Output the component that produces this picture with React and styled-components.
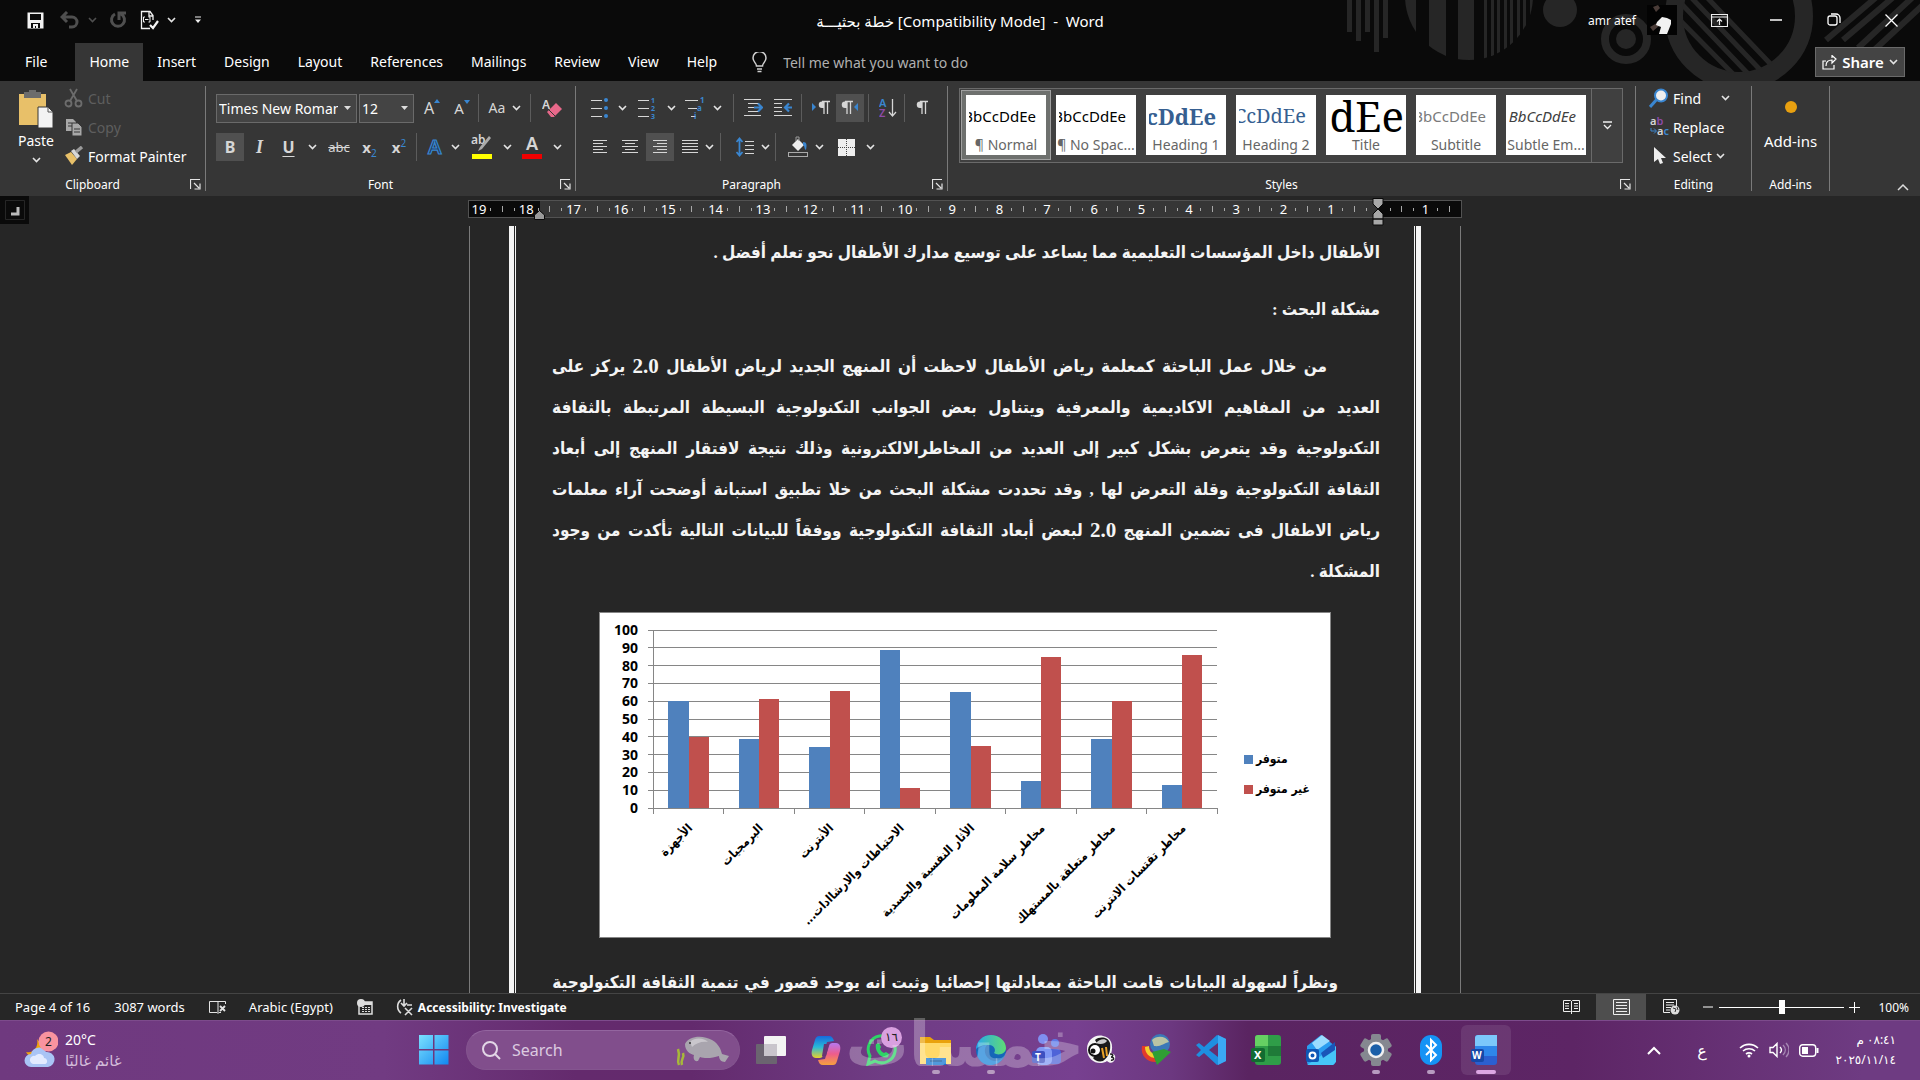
import React from 'react';
import styled, { createGlobalStyle, css } from 'styled-components';

const ui = `"Noto Sans", "Open Sans", "DejaVu Sans", sans-serif`;
const arabic = `"DejaVu Sans Condensed", "DejaVu Sans", sans-serif`;
const blue = '#3a86d0';
const ink = '#d6d6d6';

const GlobalStyle = createGlobalStyle`
  * { box-sizing: border-box; }
  body { margin: 0; background: #262626; }
  button, input, select { font: inherit; color: inherit; border: 0; background: none; padding: 0; margin: 0; border-radius: 0; outline: none; }
  svg { display: block; flex: none; }
`;

// ─── Shell ────────────────────────────────────────────────────
const Shell = styled.div`
  height: 100vh;
  display: flex;
  flex-direction: column;
  overflow: hidden;
  background: #262626;
  color: #fff;
  font-family: ${ui};
  font-size: 12px;
`;

const Header = styled.header`
  position: relative;
  flex: none;
  background: #0a0a0a;
`;

const Deco = styled.svg`
  position: absolute;
  top: 0;
  right: 0;
`;

const TitleBar = styled.div`
  position: relative;
  height: 43px;
  display: grid;
  grid-template-columns: 1fr auto 1fr;
  align-items: start;
`;

const QuickAccess = styled.div`
  display: flex;
  align-items: center;
  height: 40px;
  padding-left: 18px;
`;

const DocTitle = styled.h1`
  margin: 0;
  height: 42px;
  line-height: 42px;
  font-size: 15px;
  font-weight: 400;
  white-space: pre;
`;

const WindowTools = styled.div`
  display: flex;
  align-items: center;
  justify-content: flex-end;
  height: 40px;
`;

const UserName = styled.span`
  margin-right: 11px;
`;

const Avatar = styled.svg`
  margin-right: 14px;
`;

const Cell = styled.button`
  flex: none;
  display: flex;
  align-items: center;
  justify-content: center;
  width: ${({ $w }) => $w || 28}px;
  height: 28px;
  color: ${ink};
  background: ${({ $on }) => ($on ? '#505050' : 'transparent')};
`;

const Tabs = styled.nav`
  position: relative;
  display: flex;
  height: 38px;
  padding-left: 11px;
  font-size: 14px;
`;

const Tab = styled.button`
  padding: 0 14px 1px;
  margin-right: ${({ $file }) => ($file ? 14 : 0)}px;
  background: ${({ $on }) => ($on ? '#363636' : 'transparent')};
`;

const TellMe = styled.label`
  display: flex;
  align-items: center;
  gap: 16px;
  padding-left: 21px;

  input { width: 220px; }
  input::placeholder { color: #b0b0b0; opacity: 1; }
`;

const Share = styled.button`
  display: flex;
  align-items: center;
  justify-content: center;
  gap: 5px;
  width: 90px;
  height: 30px;
  margin: 4px 15px 0 auto;
  border: 1px solid #6a6a6a;
  background: #444;
  font-size: 15px;
  font-weight: 600;
`;

// ─── Ribbon ───────────────────────────────────────────────────
const Ribbon = styled.section`
  flex: none;
  display: flex;
  height: 115px;
  padding-top: 5px;
  background: #363636;
`;

const Group = styled.div`
  flex: ${({ $grow, $w }) => ($grow ? '1 1 auto' : `0 0 ${$w}px`)};
  min-width: 0;
  height: 105px;
  display: flex;
  flex-direction: column;
  border-right: 1px solid #7a7a7a;
`;

const GroupBody = styled.div`
  flex: 1;
  min-height: 0;
  padding: ${({ $pad }) => $pad || '0'};
`;

const GroupFoot = styled.div`
  height: 13px;
  display: grid;
  grid-template-columns: ${({ $plain }) => ($plain ? '1fr' : '1fr 20px')};
  align-items: center;
  justify-items: center;
  font-size: 12px;
  line-height: 13px;
`;

const ToolRow = styled.div`
  display: flex;
  align-items: center;
  height: 28px;
  margin-bottom: 11px;
`;

const Rule = styled.span`
  flex: none;
  width: 1px;
  height: 28px;
  margin: 0 ${({ $m, $r }) => $r || $m || 0}px 0 ${({ $m }) => $m || 0}px;
  background: #5c5c5c;
`;

const Picker = styled.label`
  display: flex;
  align-items: center;
  justify-content: space-between;
  width: ${({ $w }) => $w}px;
  height: 29px;
  margin-right: 2px;
  padding-right: 5px;
  border: 1px solid #6a6a6a;
  background: #444;
  font-size: 14px;

  select {
    appearance: none;
    width: calc(100% - 13px);
    height: 27px;
    padding-left: 2px;
    overflow: hidden;
  }
`;

const Glyph = styled.span`
  font-size: ${({ $s }) => $s || 16}px;
  font-weight: ${({ $b }) => ($b ? 700 : 400)};
  line-height: 20px;
  ${({ $serif }) => $serif && css`font-family: "Liberation Serif", serif; font-style: italic;`}
  ${({ $u }) => $u && css`text-decoration: underline; text-underline-offset: 3px;`}
  ${({ $strike }) => $strike && css`text-decoration: line-through;`}
  sub, sup { color: ${blue}; font-size: 10px; line-height: 0; font-weight: 400; }
`;

const ClipboardGrid = styled.div`
  display: flex;
`;

const PasteButton = styled.button`
  width: 56px;
  display: flex;
  flex-direction: column;
  align-items: center;
  font-size: 14px;
  line-height: 16px;
  svg + span { margin: 3px 0 8px; }
`;

const Stack = styled.div`
  display: flex;
  flex-direction: column;
  font-size: 14px;
`;

const StackItem = styled.button`
  display: flex;
  align-items: center;
  gap: 4px;
  height: 29px;
  padding-bottom: 5px;
  white-space: nowrap;
  color: ${({ $off }) => ($off ? '#5e5e5e' : '#fff')};
  > svg:last-child:not(:first-child) { margin-left: ${({ $gap }) => $gap || 0}px; }
`;

const Gallery = styled.div`
  display: flex;
  width: 664px;
  height: 75px;
  border: 1px solid #6a6a6a;
  background: #404040;
`;

const StyleCard = styled.button`
  flex: none;
  width: 90px;
  height: 70px;
  margin: 1px 0 0 ${({ $on }) => ($on ? 1 : 0)}px;
  border: 1px solid ${({ $on }) => ($on ? '#a0a0a0' : 'transparent')};
  padding: 4px;
  background: ${({ $on }) => ($on ? '#6e706e' : 'transparent')};
`;

const StyleInner = styled.span`
  display: flex;
  flex-direction: column;
  height: 60px;
  background: #fff;
  color: #666;
  font-size: 14px;
  line-height: 20px;
  white-space: nowrap;
`;

const Sample = styled.span`
  display: flex;
  justify-content: flex-end;
  align-items: center;
  height: 38px;
  margin: 2px 2px 0 3px;
  padding-right: ${({ $end }) => $end}px;
  overflow: hidden;
  color: ${({ $c }) => $c || '#000'};
  font-size: ${({ $s }) => $s || 15}px;
  line-height: 36px;
  font-family: ${({ $serif }) => ($serif ? '"Noto Serif", "Liberation Serif", serif' : ui)};
  font-style: ${({ $i }) => ($i ? 'italic' : 'normal')};
  font-weight: ${({ $b }) => ($b ? 700 : 400)};
`;

const GalleryMore = styled.button`
  width: 31px;
  margin-left: auto;
  border-left: 1px solid #6a6a6a;
  display: flex;
  align-items: center;
  justify-content: center;
`;

const AddIns = styled.button`
  display: flex;
  flex-direction: column;
  align-items: center;
  width: 100%;
  font-size: 15px;
  line-height: 18px;
  gap: 18px;
`;

const Collapse = styled.button`
  align-self: flex-end;
  width: 90px;
  display: flex;
  justify-content: flex-end;
  padding: 0 11px 5px 0;
`;

// ─── Document ─────────────────────────────────────────────────
const Workspace = styled.main`
  position: relative;
  flex: 1;
  min-height: 0;
  display: flex;
  flex-direction: column;
  align-items: center;
  padding-left: 10px;
  overflow: hidden;
`;

const TabStop = styled.button`
  position: absolute;
  left: 0;
  top: 0;
  width: 29px;
  height: 28px;
  background: #0a0a0a;
  display: flex;
  align-items: center;
  justify-content: center;
`;

const RulerWrap = styled.div`
  position: relative;
  flex: none;
  width: 994px;
  height: 30px;
  padding-top: 4px;
`;

const Ruler = styled.div`
  height: 18px;
  padding-left: 4px;
  overflow: hidden;
  border: 1px solid #525252;
  background: linear-gradient(90deg, #0a0a0a 71px, #363636 71px, #363636 910px, #0a0a0a 910px);
`;

const Scale = styled.div`
  display: grid;
  grid-template-columns: repeat(21, 1fr);
  width: 994px;
`;

const Centimetre = styled.span`
  display: grid;
  grid-template-columns: repeat(4, minmax(0, 1fr));
  align-items: center;
  justify-items: center;
  font-size: 13px;
  line-height: 16px;
`;

const Tick = styled.i`
  width: 1px;
  height: ${({ $h }) => $h}px;
  background: #a8a8a8;
`;

const Markers = styled.svg`
  position: absolute;
  top: ${({ $top }) => $top}px;
  ${({ $left }) => ($left ? 'left: 66px;' : 'right: 78px;')}
`;

const Page = styled.article`
  flex: 1;
  min-height: 0;
  width: 992px;
  padding: 0 39px;
  border: solid #7a7a7a;
  border-width: 0 1px;
  overflow: hidden;
`;

const PageFrame = styled.div`
  height: 100%;
  display: flex;
  border: solid #f4f4f4;
  border-width: 0 5px;
`;

const PageInner = styled.div`
  flex: 1;
  min-width: 0;
  margin: 0 1px;
  padding: 6px 34px 0 36px;
  border: solid #f4f4f4;
  border-width: 0 1px;
  direction: rtl;
  font-family: "Liberation Serif", ${arabic};
  font-size: 17px;
  font-weight: 700;
  color: #f4f4f4;
  line-height: 41px;
`;

const Paragraph = styled.p`
  margin: 0 0 16px;
`;

const Line = styled.span`
  display: block;
  height: 41px;
  margin-right: ${({ $indent }) => $indent || 0}px;
  white-space: nowrap;
  ${({ $full }) => $full && css`
    display: flex;
    justify-content: space-between;
  `}
`;

const Word = styled.span`
  font-size: ${({ $number }) => ($number ? 21 : 17)}px;
`;

const Figure = styled.figure`
  margin: 20px 49px 24px 0;
  width: 732px;
`;

// ─── Status bar ───────────────────────────────────────────────
const StatusBar = styled.footer`
  flex: none;
  height: 27px;
  display: flex;
  align-items: center;
  padding: 0 11px 0 15px;
  border-top: 1px solid #444;
  background: #262626;
  font-size: 12px;
`;

const StatusItem = styled.button`
  display: flex;
  align-items: center;
  gap: 3px;
  white-space: nowrap;
  margin-right: ${({ $m }) => $m || 24}px;
  font-size: ${({ $b }) => ($b ? 12 : 13)}px;
  font-weight: ${({ $b }) => ($b ? 700 : 400)};
`;

const Views = styled.div`
  display: flex;
  margin-left: auto;
`;

const ViewButton = styled.button`
  width: 50px;
  height: 26px;
  display: flex;
  align-items: center;
  justify-content: center;
  background: ${({ $on }) => ($on ? '#4e4e4e' : 'transparent')};
`;

const Zoom = styled.label`
  display: flex;
  align-items: center;
  gap: 5px;

  input {
    appearance: none;
    width: 125px;
    height: 16px;
    background: linear-gradient(#fff, #fff) center / 100% 1px no-repeat;
  }
  input::-webkit-slider-thumb {
    appearance: none;
    width: 6px;
    height: 14px;
    background: #fff;
  }
`;

const Percent = styled.span`
  margin-left: 17px;
  width: 32px;
  text-align: right;
`;

// ─── Taskbar ──────────────────────────────────────────────────
const Taskbar = styled.section`
  position: relative;
  flex: none;
  height: 60px;
  display: grid;
  grid-template-columns: 1fr auto 1fr;
  align-items: center;
  border-top: 1px solid #7d4b8c;
  padding-bottom: 1px;
  background: linear-gradient(90deg, #6f397f 0, #713b82 20%, #642a6d 30%, #632a6d 36%, #6f3c84 46%, #774090 56%, #6c3880 61%, #5a2461 65%, #5d2565 82%, #6e3b82 97%);
`;

const Weather = styled.button`
  display: flex;
  align-items: center;
  gap: 7px;
  padding-left: 24px;
  text-align: left;
  line-height: 20px;
  font-size: 14px;
  justify-self: start;
  small { display: block; font-size: 15px; color: #d3bcd9; }
`;

const Dock = styled.div`
  display: flex;
  align-items: center;
  margin-left: 10px;
`;

const Start = styled.button`
  margin-right: 17px;
`;

const Search = styled.label`
  display: flex;
  align-items: center;
  width: 274px;
  height: 40px;
  padding: 0 9px 0 15px;
  border: 1px solid #93659f;
  border-color: #93659f #84558f #84558f;
  border-radius: 20px;
  background: #814e8c;
  font-size: 16px;
  color: #dccbe0;

  input { flex: 1; min-width: 0; margin-left: 11px; }
  input::placeholder { color: #dccbe0; opacity: 1; }
`;

const Apps = styled.div`
  display: flex;
  gap: 5px;
  margin-left: 6px;
`;

const DockApp = styled.button`
  position: relative;
  width: 50px;
  height: 50px;
  display: flex;
  align-items: center;
  justify-content: center;
  border-radius: 6px;
  background: ${({ $active }) => ($active ? 'rgba(255,255,255,0.09)' : 'transparent')};
  ${({ $run, $active }) => $run && css`
    &::after {
      content: '';
      position: absolute;
      bottom: 1px;
      width: ${$active ? 20 : 8}px;
      height: 4px;
      border-radius: 2px;
      background: ${$active ? '#dda6e4' : '#b79bc0'};
    }
  `}
`;

const Badge = styled.span`
  position: absolute;
  top: 2px;
  right: 4px;
  width: 21px;
  height: 21px;
  border-radius: 50%;
  background: #d9a0e0;
  color: #222;
  font-size: 12px;
  line-height: 20px;
  text-align: center;
`;

const Tray = styled.div`
  justify-self: end;
  display: flex;
  align-items: center;
  padding-right: 24px;
`;

const TrayItem = styled.button`
  width: ${({ $w }) => $w}px;
  display: flex;
  justify-content: center;
  font-size: 16px;
`;

const Clock = styled.time`
  margin-left: 2px;
  width: 62px;
  direction: rtl;
  text-align: right;
  line-height: 20px;
  font-size: 12px;
  white-space: nowrap;
`;

const Watermark = styled.div`
  position: absolute;
  left: 44%;
  width: 240px;
  bottom: -5px;
  text-align: center;
  direction: rtl;
  font-family: "DejaVu Sans", sans-serif;
  font-size: 63px;
  line-height: 80px;
  font-weight: 700;
  color: rgba(255, 255, 255, 0.27);
  pointer-events: none;
`;

// ─── Small drawings ───────────────────────────────────────────
const Chevron = ({ c = '#e4e4e4' }) => (
  <svg width="9" height="6" viewBox="0 0 9 6"><path d="M1 1l3.5 3.5L8 1" fill="none" stroke={c} strokeWidth="1.6" /></svg>
);

const Launcher = () => (
  <svg width="11" height="11" viewBox="0 0 11 11" fill="none" stroke="#e4e4e4"><path d="M.5 10V.5H10M4 4l5 5M10 4.5V10H4.500" strokeWidth="1.2" /></svg>
);

const Lines = ({ rows, w = 18, c = ink }) => (
  <svg width={w} height="18" viewBox={`0 0 ${w} 18`}>
    {rows.map(([x, len], i) => <rect key={i} x={x} y={2 + i * 3} width={len} height="1" fill={c} />)}
  </svg>
);

const BulletIcon = ({ kind }) => (
  <svg width="20" height="22" viewBox="0 0 20 22">
    {[3, 11, 19].map((y, i) => (
      <g key={y}>
        <rect x={kind === 'multi' ? i * 3 : 1} y={y} width={kind === 'multi' ? 13 - i * 4 : 11} height="1" fill={ink} />
        {kind === 'dot' && <circle cx="16" cy={y} r="2" fill={blue} />}
        {kind === 'num' && <text x="14" y={y + 3} fontSize="7" fontWeight="700" fill={blue}>{i + 1}</text>}
        {kind === 'multi' && <text x={15 - i * 3} y={y + 3} fontSize="8" fontWeight="700" fill={blue}>{['1', 'a', 'i'][i]}</text>}
      </g>
    ))}
  </svg>
);

const IndentIcon = ({ back }) => (
  <svg width="20" height="20" viewBox="0 0 20 20">
    <path d={back ? 'M1 1.500h18M1 5.500h8M1 9.500h8M1 13.500h8M1 17.500h18' : 'M1 1.500h17M5 5.500h11M5 9.500h7M5 13.500h11M1 17.500h17'} stroke={ink} fill="none" />
    <path d={back ? 'M19 9.500h-7M16 5.500l-4 4 4 4' : 'M11 9.500h8M15 5.500l4 4-4 4'} stroke={blue} strokeWidth="2.200" fill="none" />
  </svg>
);

const Pilcrow = ({ side }) => (
  <svg width="20" height="20" viewBox="0 0 20 20">
    {side === 'ltr' && <path d="M1 5v8l4-4z" fill={blue} />}
    {side === 'rtl' && <path d="M18 5v8l-4-4z" fill={blue} />}
    <g transform={side === 'ltr' ? 'translate(3 0)' : side === 'rtl' ? 'translate(-3 0)' : 'translate(0 0)'}>
      <path d="M8 3.500h8M10 3.500V16M13.500 3.500V16" stroke={ink} strokeWidth="1.300" fill="none" />
      <path d="M10 3.500H8a3.200 3.200 0 0 0 0 6.500h2z" fill={ink} />
    </g>
  </svg>
);

const FontColor = ({ bar, children }) => (
  <svg width="22" height="26" viewBox="0 0 22 26">{children}<rect x="1" y="20" width="20" height="5" fill={bar} /></svg>
);

const HeaderArt = () => (
  <Deco width="600" height="81" viewBox="0 0 600 81" aria-hidden="true">
    <g fill="#262626">
      {[[27, 32], [36, 41], [45, 32], [54, 52], [63, 38]].map(([x, h]) => <rect key={x} x={x} width="5" height={h} />)}
      <clipPath id="disc"><circle cx="149" cy="-4" r="64" /></clipPath>
      <g clipPath="url(#disc)">
        <rect x="85" width="11" height="80" /><rect x="109" width="17" height="80" /><rect x="138" width="16" height="80" />
        {[164, 171, 177, 184, 190, 197, 203, 210].map(x => <rect key={x} x={x} width="3" height="80" />)}
      </g>
      <circle cx="240" cy="10" r="17" />
      <circle cx="306" cy="39" r="10" />
    </g>
    <circle cx="306" cy="39" r="21" fill="none" stroke="#262626" strokeWidth="8" />
    <circle cx="419" cy="16" r="65" fill="none" stroke="#262626" strokeWidth="18" />
    <clipPath id="ring"><circle cx="419" cy="16" r="57" /></clipPath>
    <path d="M340 0l80 81M354-4l80 84M366-8l80 84M378-12l84 88M340 24l60 60" stroke="#262626" strokeWidth="5" clipPath="url(#ring)" />
    <path d="M560-6l-54 46M577-6l-54 46M594-4l-56 52M606 2l-56 52" stroke="#262626" strokeWidth="6" />
  </Deco>
);

const Chart = () => {
  const values = [[60, 40], [39, 61], [34.5, 65.5], [89, 11], [65, 35], [15, 85], [39, 60], [13, 86]];
  const names = ['الأجهزة', 'البرمجيات', 'الأنترنت', 'الاحتياطات والارشاادات...', 'الأثار النفسية والجسدية', 'مخاطر سلامة المعلومات', 'مخاطر متعلقة بالمستهلك', 'مخاطر تقتسات الانترنت'];
  const y = v => 196 - v * 1.78;
  return (
    <svg width="732" height="326" viewBox="0 0 732 326" fontFamily={ui} fontWeight="700">
      <rect x="0.5" y="0.5" width="731" height="325" fill="#fff" stroke="#868686" />
      <g stroke="#868686" shapeRendering="crispEdges">
        {[...Array(11)].map((_, i) => <line key={i} x1="49" x2="618" y1={y(i * 10)} y2={y(i * 10)} />)}
        {[...Array(9)].map((_, i) => <line key={i} x1={54 + i * 70.5} x2={54 + i * 70.5} y1={i ? 196 : 18} y2="202" />)}
      </g>
      {values.map(([a, b], i) => (
        <g key={i} shapeRendering="crispEdges">
          <rect x={69 + i * 70.5} y={y(a)} width="20.5" height={a * 1.78} fill="#4f81bd" />
          <rect x={89.5 + i * 70.5} y={y(b)} width="20" height={b * 1.78} fill="#c0504d" />
        </g>
      ))}
      {[...Array(11)].map((_, i) => <text key={i} x="39" y={y(i * 10) + 5} textAnchor="end" fontSize="14" direction="ltr">{i * 10}</text>)}
      {names.map((n, i) => (
        <text key={n} transform={`translate(${94 + i * 70.5} 217) rotate(-45)`} direction="rtl" textAnchor="start" fontSize="12" fontFamily={arabic}>{n}</text>
      ))}
      <rect x="645" y="143" width="9" height="9" fill="#4f81bd" />
      <rect x="645" y="173" width="9" height="9" fill="#c0504d" />
      <g fontSize="12" direction="rtl" textAnchor="end" fontFamily={arabic}>
        <text x="657" y="151">متوفر</text>
        <text x="657" y="181">غير متوفر</text>
      </g>
    </svg>
  );
};

// ─── Taskbar icons ────────────────────────────────────────────
const Tile = ({ children }) => <svg width="32" height="32" viewBox="0 0 32 32">{children}</svg>;

const dock = [
  { name: 'Task view', icon: <Tile><rect x="1" y="10" width="21" height="20" rx="1" fill="#6b6470" /><rect x="9" y="2" width="22" height="20" rx="1" fill="#f3f3f3" /><rect x="9" y="10" width="13" height="12" fill="#c9c5cc" /></Tile> },
  {
    name: 'Copilot',
    icon: (
      <Tile>
        <linearGradient id="cpa" x1="0" y1="0" x2="0" y2="1"><stop stopColor="#1769dd" /><stop offset=".5" stopColor="#28b9d8" /><stop offset="1" stopColor="#e9d12c" /></linearGradient>
        <linearGradient id="cpb" x1="0" y1="0" x2="0" y2="1"><stop stopColor="#b678f0" /><stop offset=".5" stopColor="#ee5c8b" /><stop offset="1" stopColor="#f6a13d" /></linearGradient>
        <path d="M9 2h10c3 0 4 2 5 5l-7 1-4 13c-1 3-2 3-5 3H6c-4 0-5-4-4-8l3-10c1-3 2-4 4-4z" fill="url(#cpa)" />
        <path d="M23 31H13c-3 0-4-2-5-5l7-1 4-13c1-3 2-3 5-3h2c4 0 5 4 4 8l-3 10c-1 3-2 4-4 4z" fill="url(#cpb)" />
        <path d="M14 10h5l-3 12h-4z" fill="#693473" />
      </Tile>
    ),
  },
  { name: 'WhatsApp', badge: '١٦', icon: <Tile><path d="M3 30l2-8A13.500 13.500 0 1 1 10 27z" fill="none" stroke="#2ed366" strokeWidth="3" /><path d="M11 10l3-1 2 4-1 2c1 2 2 3 4 4l2-1 3 2-1 3c-6 3-14-6-12-13z" fill="#2ed366" /></Tile> },
  { name: 'File Explorer', run: true, icon: <Tile><path d="M0 3h10l4 3h17v24H0z" fill="#e9a20c" /><rect y="9" width="31" height="21" fill="#ffd968" /><path d="M6 24h20v7H6z" fill="#1273cf" /><path d="M10 27h12" stroke="#0b4c92" strokeWidth="1.500" /></Tile> },
  {
    name: 'Edge',
    run: true,
    icon: (
      <Tile>
        <linearGradient id="edg" x1="0" x2="1"><stop stopColor="#2aa7ea" /><stop offset="1" stopColor="#5fdc74" /></linearGradient>
        <circle cx="16" cy="16" r="15" fill="#1567b8" />
        <path d="M1 16C1 7 8 1 16 1s15 6 15 13c0 6-8 8-12 5 2-2 1-8-5-8-7 0-13 2-13 5z" fill="url(#edg)" />
        <path d="M2 20c1-7 6-9 10-9-3 3-3 9 1 13s10 4 15 0c-3 5-8 7-13 7C8 31 3 26 2 20z" fill="#1b83d8" />
      </Tile>
    ),
  },
  { name: 'Teams', icon: <Tile><circle cx="13" cy="5" r="5" fill="#7f8ff0" /><circle cx="25" cy="9" r="4" fill="#5e7ae8" /><rect x="18" y="15" width="13" height="15" rx="4" fill="#4e63d8" /><rect x="6" y="13" width="16" height="18" rx="5" fill="#8098f5" /><rect x="2" y="17" width="13" height="12" rx="2" fill="#3d4fc0" /><text x="5" y="27" fontSize="10" fontWeight="700" fill="#fff">T</text></Tile> },
  { name: 'Bee', icon: <Tile><path d="M2 15C2 6 10 0 18 2c8 1 11 9 8 18 3-1 5 2 4 5-1 4-5 5-8 2-7 5-20 1-20-12z" fill="#f4f4f4" /><path d="M10 6c5-4 13-3 15 3 1 7-1 14-7 18-4 1-8 0-10-3l8-8z" fill="#1b1b1b" /><circle cx="10" cy="16" r="7" fill="#111" /><circle cx="10" cy="16" r="5" fill="#fff" /><circle cx="8" cy="17" r="2.500" fill="#111" /><path d="M17 14l2 10M21 13l1 9" stroke="#e9a227" strokeWidth="2" /><path d="M11 9c3-4 9-5 11-2-2 3-7 4-11 2z" fill="#ccc" /><path d="M25 20c4 0 3 3 1 3 4 0 3 4 0 3" stroke="#222" fill="none" strokeWidth="1.500" /></Tile> },
  { name: 'Download Manager', icon: <Tile><circle cx="20" cy="10" r="10" fill="#3b78b8" /><path d="M12 6c5-5 14-4 17 2-5 1-8 5-15 4z" fill="#b9c4a4" /><path d="M2 12c-2 10 6 17 15 16l-1-5C9 23 6 18 7 12z" fill="#e33a2a" /><path d="M5 13c0 6 4 11 11 11v-4c-4 0-7-3-7-8z" fill="#f4cf2d" /><path d="M12 18l12-3 7 3-14 13z" fill="#2f9e33" /></Tile> },
  { name: 'VS Code', icon: <Tile><path d="M22 1l9 4v22l-9 4L9 19l-5 4-3-2 5-5-5-5 3-2 5 4z" fill="#1e8fe0" /><path d="M23 9v14l-9-7z" fill="#642f70" /><path d="M23 1l8 4v22l-8 4z" fill="#3ba9f4" /></Tile> },
  { name: 'Excel', icon: <Tile><rect x="5" y="1" width="26" height="30" rx="3" fill="#2f9d48" /><path d="M5 12V4a3 3 0 0 1 3-3h10v11z" fill="#66d063" /><rect x="18" y="12" width="13" height="10" fill="#1f7a38" /><rect x="1" y="14" width="14" height="14" rx="2" fill="#136b31" /><text x="4" y="25" fontSize="11" fontWeight="700" fill="#fff">X</text></Tile> },
  { name: 'Outlook', icon: <Tile><path d="M2 12L16 1l14 11v16a3 3 0 0 1-3 3H5a3 3 0 0 1-3-3z" fill="#2a9df0" /><path d="M7 9l10-8 8 6-13 9z" fill="#9bdcff" /><path d="M2 31L31 12v16l-3 3z" fill="#46c5f8" /><path d="M16 19L30 8v8L18 24z" fill="#1a55b8" /><rect x="1" y="15" width="13" height="13" rx="2" fill="#0f57b5" /><circle cx="7.500" cy="21.500" r="3" fill="none" stroke="#fff" strokeWidth="2" /></Tile> },
  { name: 'Settings', run: true, icon: <Tile><g fill="#858890">{[0, 60, 120].map(r => <rect key={r} x="11" width="10" height="32" rx="2" transform={`rotate(${r} 16 16)`} />)}<circle cx="16" cy="16" r="12" /></g><circle cx="16" cy="16" r="7" fill="#1b5fa8" stroke="#f0f0f0" strokeWidth="2.500" /></Tile> },
  { name: 'Bluetooth', run: true, icon: <Tile><rect x="5" y="1" width="22" height="30" rx="11" fill="#1593f5" /><path d="M11 11l10 10-5 5V6l5 5-10 10" fill="none" stroke="#fff" strokeWidth="2" /></Tile> },
  { name: 'Word', run: true, active: true, icon: <Tile><rect x="5" y="1" width="22" height="30" rx="3" fill="#2b5fd0" /><path d="M5 12V4a3 3 0 0 1 3-3h19v11z" fill="#7cc8fb" /><rect x="5" y="12" width="22" height="10" fill="#2e87ea" /><rect x="1" y="15" width="13" height="13" rx="2" fill="#1648a8" /><text x="2" y="25" fontSize="10" fontWeight="700" fill="#fff">W</text></Tile> },
];

const tabs = ['File', 'Home', 'Insert', 'Design', 'Layout', 'References', 'Mailings', 'Review', 'View', 'Help'];

const gallery = [
  { label: '¶ Normal', end: 8, on: true },
  { label: '¶ No Spac...', end: 8 },
  { label: 'Heading 1', end: 8, s: 22, serif: true, b: true, c: '#365f91' },
  { label: 'Heading 2', end: 8, s: 20, serif: true, c: '#365f91' },
  { label: 'Title', end: 0, s: 42, serif: true },
  { label: 'Subtitle', end: 8, c: '#7a7a7a' },
  { label: 'Subtle Em...', end: 8, c: '#404040', i: true },
];

const body = [
  ['من  خلال عمل الباحثة كمعلمة رياض الأطفال لاحظت أن المنهج الجديد لرياض الأطفال 2.0 يركز على', 53],
  ['العديد من المفاهيم الاكاديمية والمعرفية ويتناول بعض الجوانب التكنولوجية البسيطة المرتبطة بالثقافة'],
  ['التكنولوجية وقد يتعرض بشكل كبير إلى العديد من المخاطرالالكترونية وذلك نتيجة لافتقار المنهج إلى أبعاد'],
  ['الثقافة التكنولوجية وقلة التعرض لها , وقد تحددت مشكلة البحث من خلا تطبيق استبانة أوضحت آراء معلمات'],
  ['رياض الاطفال فى تضمين المنهج 2.0 لبعض أبعاد الثقافة التكنولوجية ووفقاً للبيانات التالية تأكدت من وجود'],
];

const Justified = ({ text, indent }) => (
  <Line $full $indent={indent}>{text.split(/ +/).map((w, i) => <Word key={i} $number={/\d/.test(w)}>{w}</Word>)}</Line>
);

const Foot = ({ children, launcher = true }) => (
  <GroupFoot $plain={!launcher}><span>{children}</span>{launcher && <Launcher />}</GroupFoot>
);

const App = () => (
  <Shell>
    <GlobalStyle />
    <Header>
      <HeaderArt />
      <TitleBar>
        <QuickAccess>
          <Cell $w={34} aria-label="Save"><svg width="17" height="17" viewBox="0 0 17 17"><path d="M.5.500h16v16H.500z" fill="#f2f2f2" /><path d="M3 2h11v6H3zM4 11h9v5H4z" fill="#0a0a0a" /><path d="M6 12h5v4h-2v-2H8v2H6z" fill="#f2f2f2" /></svg></Cell>
          <Cell $w={36} aria-label="Undo"><svg width="20" height="18" viewBox="0 0 20 18" fill="none" stroke="#4f4f4f" strokeWidth="3"><path d="M2 6h10a5 5 0 0 1 0 10H9M7 1L2 6l5 5" /></svg></Cell>
          <Cell $w={8} aria-label="Undo list"><Chevron c="#4f4f4f" /></Cell>
          <Cell $w={44} aria-label="Redo"><svg width="18" height="18" viewBox="0 0 18 18" fill="none" stroke="#4f4f4f" strokeWidth="3"><path d="M6 3a6.500 6.500 0 1 0 6 0M10 9V2h7" /></svg></Cell>
          <Cell $w={20} aria-label="Document check"><svg width="20" height="20" viewBox="0 0 20 20" fill="none" stroke="#f2f2f2"><path d="M10 18.500H1.500v-17H10l3 4V10M9 1.500V6h4" strokeWidth="1.300" /><path d="M5 7H3.500v5H5M8.500 7H10v5H8.500M5 9.500h3.500" /><path d="M10 15l3 3 5-7" strokeWidth="2.200" /></svg></Cell>
          <Cell $w={22} aria-label="Check options"><Chevron /></Cell>
          <Cell $w={32} aria-label="Customize toolbar"><svg width="8" height="8" viewBox="0 0 8 8"><path d="M1 1h6" stroke="#eee" /><path d="M1 3.500h6L4 7z" fill="#eee" /></svg></Cell>
        </QuickAccess>
        <DocTitle>خطة بحثيـــة [Compatibility Mode]  -  Word</DocTitle>
        <WindowTools>
          <UserName>amr atef</UserName>
          <Avatar width="30" height="30" viewBox="0 0 30 30"><rect width="30" height="30" fill="#030303" /><path d="M6 2l5-2 2 3-4 4zM3 22l7-4 2 3-6 5z" fill="#4a3c38" /><path d="M10 17l5-5 5 1 4 2v4l-4 10h-8l2-7-5-2z" fill="#f1f1f1" /></Avatar>
          <Cell $w={56} aria-label="Ribbon display"><svg width="17" height="13" viewBox="0 0 17 13" fill="none" stroke="#eee"><path d="M.5.500h16v12H.500zM.5 3h16M8.500 11V5M6 7.500L8.500 5 11 7.500" strokeWidth="1.200" /></svg></Cell>
          <Cell $w={58} aria-label="Minimize"><svg width="12" height="13" viewBox="0 0 12 13"><path d="M0 6h12" stroke="#fff" strokeWidth="1.500" /></svg></Cell>
          <Cell $w={58} aria-label="Restore"><svg width="14" height="14" viewBox="0 0 14 14" fill="none" stroke="#fff" strokeWidth="1.300"><rect x="1" y="3" width="9" height="9" rx="2" /><path d="M4 1h5a4 4 0 0 1 4 4v5" /></svg></Cell>
          <Cell $w={57} aria-label="Close"><svg width="13" height="13" viewBox="0 0 13 13"><path d="M.5.500l12 12M12.500.500l-12 12" stroke="#fff" strokeWidth="1.300" /></svg></Cell>
        </WindowTools>
      </TitleBar>
      <Tabs>
        {tabs.map(t => <Tab key={t} $file={t === 'File'} $on={t === 'Home'}>{t}</Tab>)}
        <TellMe>
          <svg width="15" height="21" viewBox="0 0 15 21" fill="none" stroke="#d0d0d0" strokeWidth="1.500"><path d="M4.500 14c0-3-3.500-4-3.500-8a6.500 6.500 0 0 1 13 0c0 4-3.500 5-3.500 8zM5 17h5M5.500 19.500h4" /></svg>
          <input placeholder="Tell me what you want to do" aria-label="Tell me what you want to do" />
        </TellMe>
        <Share>
          <svg width="15" height="15" viewBox="0 0 15 15" fill="none" stroke="#fff" strokeWidth="1.200"><path d="M4 6H1v8h11v-4M4 11c0-4 2-6 6-6V8l4-4-4-3.500V3" /></svg>
          Share <Chevron />
        </Share>
      </Tabs>
    </Header>

    <Ribbon>
      <Group $w={206}>
        <GroupBody $pad="0 0 0 8px">
          <ClipboardGrid>
            <PasteButton>
              <svg width="36" height="44" viewBox="0 0 36 44"><rect x="1" y="8" width="27" height="31" fill="#e8c069" /><path d="M6 12V6h5V4h7v2h5v6z" fill="#6c6c6c" /><path d="M20 21h10l5 5v16H20z" fill="#f3f3f3" stroke="#363636" /><path d="M30 21v5h5" fill="none" stroke="#555" /></svg>
              <span>Paste</span>
              <Chevron />
            </PasteButton>
            <Stack>
              <StackItem $off><svg width="20" height="20" viewBox="0 0 20 20" fill="none" stroke="#6c6c6c" strokeWidth="1.800"><path d="M6 1l7 12M13 1L6 13" /><circle cx="4.500" cy="15.500" r="3" /><circle cx="14.500" cy="15.500" r="3" /></svg>Cut</StackItem>
              <StackItem $off><svg width="20" height="20" viewBox="0 0 20 20"><path d="M2 2h7l3 3v9H2z" fill="#a8a8a8" /><path d="M8 6h6l4 4v9H8z" fill="#a8a8a8" stroke="#363636" /><path d="M4 6h4M4 9h4M10 12h6M10 15h6" stroke="#363636" /></svg>Copy</StackItem>
              <StackItem><svg width="20" height="20" viewBox="0 0 20 20"><path d="M1 9l6-3 6 7-5 6z" fill="#e8c069" /><path d="M7 5l3-2 6 7-3 3z" fill="#d8d8d8" /><path d="M12 6l6-5" stroke="#9a9a9a" strokeWidth="3.500" /></svg>Format Painter</StackItem>
            </Stack>
          </ClipboardGrid>
        </GroupBody>
        <Foot>Clipboard</Foot>
      </Group>

      <Group $w={370}>
        <GroupBody $pad="8px 0 0 10px">
          <ToolRow>
            <Picker $w={141}>
              <select aria-label="Font"><option>Times New Roman</option></select>
              <svg width="7" height="5" viewBox="0 0 7 5"><path d="M0 0h7L3.500 4z" fill="#ddd" /></svg>
            </Picker>
            <Picker $w={55}>
              <select aria-label="Font size"><option>12</option></select>
              <svg width="7" height="5" viewBox="0 0 7 5"><path d="M0 0h7L3.500 4z" fill="#ddd" /></svg>
            </Picker>
            <Cell $w={32} aria-label="Grow font"><Glyph>A</Glyph><svg width="6" height="18" viewBox="0 0 6 18"><path d="M0 4h6L3 0z" fill={blue} /></svg></Cell>
            <Cell $w={28} aria-label="Shrink font"><Glyph $s={15}>A</Glyph><svg width="6" height="18" viewBox="0 0 6 18"><path d="M0 1h6L3 5z" fill={blue} /></svg></Cell>
            <Rule $m={2} />
            <Cell $w={32} aria-label="Change case"><Glyph $s={14}>Aa</Glyph></Cell>
            <Cell $w={6} aria-label="Case list"><Chevron /></Cell>
            <Rule $m={11} />
            <Cell $w={20} aria-label="Clear formatting"><svg width="20" height="20" viewBox="0 0 20 20"><text x="0" y="11" fontSize="12" fontWeight="600" fill={ink}>A</text><path d="M5 14l9-9 6 6-8 8H9z" fill="#e8688a" /><path d="M7 12l6 6" stroke="#363636" /></svg></Cell>
          </ToolRow>
          <ToolRow>
            <Cell $on aria-label="Bold"><Glyph $b>B</Glyph></Cell>
            <Cell $w={31} aria-label="Italic"><Glyph $serif $b $s={18}>I</Glyph></Cell>
            <Cell $w={27} aria-label="Underline"><Glyph $b $u>U</Glyph></Cell>
            <Cell $w={20} aria-label="Underline list"><Chevron /></Cell>
            <Cell $w={34} aria-label="Strikethrough"><Glyph $s={13} $strike>abc</Glyph></Cell>
            <Cell $w={27} aria-label="Subscript"><Glyph $b $s={15}>x<sub>2</sub></Glyph></Cell>
            <Cell $w={32} aria-label="Superscript"><Glyph $b $s={15}>x<sup>2</sup></Glyph></Cell>
            <Rule $m={1} />
            <Cell $w={33} aria-label="Text effects"><svg width="20" height="22" viewBox="0 0 20 22"><text x="3" y="18" fontSize="20" fontWeight="600" fill="#1d3a58" stroke={blue} strokeWidth="1.200">A</text></svg></Cell>
            <Cell $w={8} aria-label="Effects list"><Chevron /></Cell>
            <Cell $w={46} aria-label="Highlight"><FontColor bar="#ffff00"><text x="0" y="10" fontSize="12" fontWeight="600" fill={ink}>ab</text><path d="M20 4l-9 11-4 2 2-4 9-11z" fill="#aaa" /></FontColor></Cell>
            <Cell $w={4} aria-label="Highlight list"><Chevron /></Cell>
            <Cell $w={46} aria-label="Font color"><FontColor bar="#f00000"><text x="5" y="16" fontSize="18" fontWeight="600" fill={ink}>A</text></FontColor></Cell>
            <Cell $w={4} aria-label="Color list"><Chevron /></Cell>
          </ToolRow>
        </GroupBody>
        <Foot>Font</Foot>
      </Group>

      <Group $w={372}>
        <GroupBody $pad="8px 0 0 10px">
          <ToolRow>
            <Cell $w={28} aria-label="Bullets"><BulletIcon kind="dot" /></Cell>
            <Cell $w={16} aria-label="Bullets list"><Chevron /></Cell>
            <Cell $w={34} aria-label="Numbering"><BulletIcon kind="num" /></Cell>
            <Cell $w={14} aria-label="Numbering list"><Chevron /></Cell>
            <Cell $w={34} aria-label="Multilevel"><BulletIcon kind="multi" /></Cell>
            <Cell $w={10} aria-label="Multilevel list"><Chevron /></Cell>
            <Rule $m={11} $r={3} />
            <Cell $w={32} aria-label="Decrease indent"><IndentIcon /></Cell>
            <Cell $w={28} aria-label="Increase indent"><IndentIcon back /></Cell>
            <Rule $m={4} />
            <Cell $w={30} aria-label="Left to right"><Pilcrow side="ltr" /></Cell>
            <Cell $on aria-label="Right to left"><Pilcrow side="rtl" /></Cell>
            <Rule $m={4} />
            <Cell $w={30} aria-label="Sort"><svg width="18" height="20" viewBox="0 0 18 20"><text x="0" y="9" fontSize="11" fontWeight="600" fill={blue}>A</text><text x="0" y="19" fontSize="11" fontWeight="600" fill="#8e4ba8">Z</text><path d="M13.500 1v16M10 14l3.500 4 3.500-4" fill="none" stroke={ink} strokeWidth="1.300" /></svg></Cell>
            <Rule $m={1} />
            <Cell $w={32} aria-label="Show marks"><Pilcrow /></Cell>
          </ToolRow>
          <ToolRow>
            <Cell $w={28} aria-label="Align left"><Lines rows={[[2, 14], [2, 10], [2, 14], [2, 10], [2, 14]]} /></Cell>
            <Cell $w={32} aria-label="Center"><Lines rows={[[1, 16], [4, 10], [1, 16], [4, 10], [1, 16]]} /></Cell>
            <Cell $on aria-label="Align right"><Lines rows={[[2, 14], [6, 10], [2, 14], [6, 10], [2, 14]]} /></Cell>
            <Cell $w={32} aria-label="Justify"><Lines rows={[[1, 16], [1, 16], [1, 16], [1, 16], [1, 16]]} /></Cell>
            <Cell $w={6} aria-label="Justify list"><Chevron /></Cell>
            <Rule $m={8} />
            <Cell $w={32} aria-label="Line spacing"><svg width="18" height="20" viewBox="0 0 18 20"><path d="M3.500 2v16M.5 5l3-3.500 3 3.500M.5 15l3 3.500 3-3.500" fill="none" stroke={blue} strokeWidth="1.800" /><path d="M9 4.500h9M9 8.500h9M9 12.500h9M9 16.500h9" stroke={ink} /></svg></Cell>
            <Cell $w={8} aria-label="Spacing list"><Chevron /></Cell>
            <Rule $m={6} />
            <Cell $w={32} aria-label="Shading"><svg width="20" height="22" viewBox="0 0 20 22"><path d="M4 9l6-6 6 6-6 6z" fill="#eee" /><path d="M8 5V1h3v4" fill="none" stroke="#999" /><path d="M15 6c4 0 4 3 3 8-2-1-1-4-3-5z" fill={blue} /><rect x=".5" y="16.500" width="19" height="4" fill="#363636" stroke="#aaa" /></svg></Cell>
            <Cell $w={10} aria-label="Shading list"><Chevron /></Cell>
            <Cell $w={44} aria-label="Borders"><svg width="17" height="17" viewBox="0 0 17 17"><rect width="17" height="17" fill="#eee" /><path d="M8.500 0v17M0 8.500h17" stroke="#444" strokeDasharray="1 1" /></svg></Cell>
            <Cell $w={4} aria-label="Borders list"><Chevron /></Cell>
          </ToolRow>
        </GroupBody>
        <Foot>Paragraph</Foot>
      </Group>

      <Group $grow>
        <GroupBody $pad="2px 0 0 11px">
          <Gallery>
            {gallery.map(g => (
              <StyleCard key={g.label} $on={g.on}>
                <StyleInner>
                  <Sample $end={g.end} $s={g.s} $serif={g.serif} $b={g.b} $c={g.c} $i={g.i}>AaBbCcDdEe</Sample>
                  {g.label}
                </StyleInner>
              </StyleCard>
            ))}
            <GalleryMore aria-label="More styles"><svg width="9" height="9" viewBox="0 0 9 9" fill="none" stroke="#eee" strokeWidth="1.300"><path d="M0 1h9M1 4l3.500 3.500L8 4" /></svg></GalleryMore>
          </Gallery>
        </GroupBody>
        <Foot>Styles</Foot>
      </Group>

      <Group $w={116}>
        <GroupBody $pad="0 0 0 13px">
          <Stack>
            <StackItem $gap={16}><svg width="20" height="20" viewBox="0 0 20 20"><path d="M1 19l8-9" stroke={blue} strokeWidth="3" /><circle cx="12" cy="7.500" r="6" fill="#eee" stroke={blue} strokeWidth="2" /></svg>Find <Chevron /></StackItem>
            <StackItem><svg width="20" height="20" viewBox="0 0 20 20"><g fontSize="11" fontWeight="600"><text x="1" y="8" fill={ink}>a<tspan fill="#8e4ba8">b</tspan></text><text x="8" y="18" fill={ink}>a<tspan fill={blue}>c</tspan></text></g><path d="M2 11v3h5M5 11.500L7.500 14 5 16.500" fill="none" stroke={blue} /></svg>Replace</StackItem>
            <StackItem><svg width="20" height="20" viewBox="0 0 20 20"><path d="M5 1v15l4-3 2 5 3-1-2-5h5z" fill="#eee" /></svg>Select <Chevron /></StackItem>
          </Stack>
        </GroupBody>
        <Foot launcher={false}>Editing</Foot>
      </Group>

      <Group $w={78}>
        <GroupBody $pad="14px 0 0">
          <AddIns><svg width="14" height="14" viewBox="0 0 14 14"><circle cx="7" cy="7" r="6" fill="#e8a010" /></svg>Add-ins</AddIns>
        </GroupBody>
        <Foot launcher={false}>Add-ins</Foot>
      </Group>
      <Collapse aria-label="Collapse ribbon"><svg width="12" height="8" viewBox="0 0 12 8"><path d="M1 7l5-5 5 5" fill="none" stroke="#ddd" strokeWidth="1.500" /></svg></Collapse>
    </Ribbon>

    <Workspace>
      <TabStop aria-label="Tab selector"><svg width="20" height="20" viewBox="0 0 20 20"><path d="M.5.500h19v19H.500z" fill="none" stroke="#262626" /><path d="M13 7v7H6" fill="none" stroke="#bbb" strokeWidth="3" /></svg></TabStop>
      <RulerWrap>
        <Ruler>
          <Scale>
            {[...Array(21)].map((_, i) => {
              const n = Math.abs(19 - i);
              return <Centimetre key={i}><span>{n || ''}</span><Tick $h={3} /><Tick $h={6} /><Tick $h={3} /></Centimetre>;
            })}
          </Scale>
        </Ruler>
        <Markers $left $top={14} width="11" height="10" viewBox="0 0 11 10"><path d="M.5 9.500V5l5-4.500 5 4.500v4.500z" fill="#9a9a9a" stroke="#0a0a0a" /></Markers>
        <Markers $top={2} width="12" height="28" viewBox="0 0 12 28" fill="#a8a8a8" stroke="#0a0a0a"><path d="M1 .5h10V6L6 11 1 6zM1 21v-5l5-5 5 5v5zM1 21h10v6H1z" /></Markers>
      </RulerWrap>
      <Page>
        <PageFrame>
          <PageInner>
            <Paragraph><Line>الأطفال داخل المؤسسات التعليمية مما يساعد على توسيع مدارك الأطفال نحو تعلم أفضل .</Line></Paragraph>
            <Paragraph><Line>مشكلة البحث  :</Line></Paragraph>
            <Paragraph>
              {body.map(([text, indent]) => <Justified key={text} text={text} indent={indent} />)}
              <Line>المشكلة .</Line>
            </Paragraph>
            <Figure><Chart /></Figure>
            <Paragraph><Justified indent={42} text="ونظراً لسهولة البيانات قامت الباحثة بمعادلتها إحصائيا وثبت أنه يوجد قصور في تنمية الثقافة التكنولوجية" /></Paragraph>
          </PageInner>
        </PageFrame>
      </Page>
    </Workspace>

    <StatusBar>
      <StatusItem>Page 4 of 16</StatusItem>
      <StatusItem>3087 words</StatusItem>
      <StatusItem $m={22} aria-label="Proofing"><svg width="18" height="16" viewBox="0 0 18 16" fill="none" stroke="#e4e4e4"><path d="M9 2.500H.500v11H8l1 1 1-1h2M9 2v12M9 2.500h7.500V5" /><path d="M11 7l5 5M16 7l-5 5" strokeWidth="1.800" /></svg></StatusItem>
      <StatusItem>Arabic (Egypt)</StatusItem>
      <StatusItem $m={22} aria-label="Macro"><svg width="16" height="16" viewBox="0 0 16 16"><path d="M2 3h13v12H2z" fill="none" stroke="#ddd" strokeWidth="1.500" /><path d="M2 3h13v3H2z" fill="#ddd" /><circle cx="4" cy="4" r="4" fill="#ddd" /><path d="M5 8.500h8M5 10.500h8M5 12.500h8" stroke="#ddd" strokeDasharray="2 1" /></svg></StatusItem>
      <StatusItem $b><svg width="20" height="18" viewBox="0 0 20 18" fill="none" stroke="#ddd" strokeWidth="1.600"><path d="M6 2a8 8 0 0 0 0 13M9 1v6M6 5l3 3 3-3M12 7h5M10 10l7 7M17 10l-7 7" /></svg>Accessibility: Investigate</StatusItem>
      <Views>
        <ViewButton aria-label="Read mode"><svg width="17" height="16" viewBox="0 0 17 16" fill="none" stroke="#eee"><path d="M.5 1.500h7l1 1 1-1h7v11h-7l-1 1-1-1h-7zM8.500 2v13M2 4.500h4M2 7h4M2 9.500h4M11 4.500h4M11 7h4M11 9.500h4" /></svg></ViewButton>
        <ViewButton $on aria-label="Print layout"><svg width="17" height="16" viewBox="0 0 17 16" fill="none" stroke="#eee"><path d="M.5.500h16v15H.500zM3 3.500h11M3 6.500h11M3 9.500h11M3 12.500h11" /></svg></ViewButton>
        <ViewButton aria-label="Web layout"><svg width="17" height="16" viewBox="0 0 17 16" fill="none" stroke="#eee"><path d="M7 13.500H.500V.500h13V7M3 3.500h8M3 6h8M3 8.500h5M3 11h4" /><circle cx="12" cy="11" r="4.500" fill="#ddd" stroke="none" /><path d="M10 9l3 1-1 3M14 8l1 3" stroke="#333" /></svg></ViewButton>
      </Views>
      <Zoom>
        <svg width="18" height="12" viewBox="0 0 18 12"><path d="M7 6h10" stroke="#fff" /></svg>
        <input type="range" min="0" max="100" defaultValue="50" aria-label="Zoom" />
        <svg width="11" height="11" viewBox="0 0 11 11"><path d="M0 5.500h11M5.500 0v11" stroke="#fff" /></svg>
      </Zoom>
      <Percent>100%</Percent>
    </StatusBar>

    <Taskbar>
      <Weather>
        <svg width="34" height="38" viewBox="0 0 34 38"><path d="M13 8c2 8-4 15-11 13 3 7 16 6 18-4z" fill="#f0a30c" /><path d="M7 36a6.500 6.500 0 0 1 0-13 8 8 0 0 1 15-2 7.500 7.500 0 0 1 2 15z" fill="#a9c4f5" /><path d="M9 33a4 4 0 0 1 2-8c4-4 9-1 9 2 4 0 4 6 1 6z" fill="#e3ebff" /><circle cx="24.500" cy="10.500" r="10" fill="#f9939f" /><text x="21" y="15" fontSize="12" fill="#222">2</text></svg>
        <span>20°C<small>غائم غالبًا</small></span>
      </Weather>
      <Dock>
        <Start aria-label="Start"><svg width="30" height="30" viewBox="0 0 30 30"><linearGradient id="win" x1="0" y1="0" x2="1" y2="1"><stop stopColor="#7be1ff" /><stop offset="1" stopColor="#1187f0" /></linearGradient><path d="M0 0h14v14H0zM15.500 0H29.500v14h-14zM0 15.500h14v14H0zM15.500 15.500h14v14h-14z" fill="url(#win)" /></svg></Start>
        <Search>
          <svg width="19" height="19" viewBox="0 0 19 19" fill="none" stroke="#e2d6e6" strokeWidth="2"><circle cx="8" cy="8" r="7" /><path d="M13 13l5 5" /></svg>
          <input placeholder="Search" aria-label="Search" />
          <svg width="54" height="32" viewBox="0 0 54 32"><path d="M9 10C13 1 28 1 36 6c7 4 9 10 10 14l7 2-4 6c-4 0-6-3-6-6-6 2-14 3-19 1l-2 4c-4 1-5-3-4-6-4-1-9-4-9-11z" fill="#a9a5ae" /><path d="M14 8c5-5 14-4 18 0-6-1-12 1-16 5z" fill="#c9c6cc" /><circle cx="14" cy="9" r="1" fill="#333" /><path d="M3 31C0 25 5 24 2 15M6 31c-2-6 3-7 1-12" stroke="#a7b83a" strokeWidth="2.500" fill="none" /></svg>
        </Search>
        <Apps>
          {dock.map(a => (
            <DockApp key={a.name} aria-label={a.name} $run={a.run} $active={a.active}>
              {a.icon}
              {a.badge && <Badge>{a.badge}</Badge>}
            </DockApp>
          ))}
        </Apps>
      </Dock>
      <Tray>
        <TrayItem $w={48} aria-label="Hidden icons"><svg width="14" height="9" viewBox="0 0 14 9"><path d="M1 8l6-6 6 6" fill="none" stroke="#fff" strokeWidth="2" /></svg></TrayItem>
        <TrayItem $w={48}>ع</TrayItem>
        <TrayItem $w={46} aria-label="Network"><svg width="20" height="16" viewBox="0 0 20 16" fill="none" stroke="#fff" strokeWidth="1.600"><path d="M1 6a13 13 0 0 1 18 0M4 9a9 9 0 0 1 12 0M7 12a5 5 0 0 1 6 0" /><circle cx="10" cy="14" r="1.500" fill="#fff" stroke="none" /></svg></TrayItem>
        <TrayItem $w={14} aria-label="Volume"><svg width="20" height="16" viewBox="0 0 20 16" fill="none" stroke="#fff" strokeWidth="1.400"><path d="M1 5.500h3l4-4v13l-4-4H1zM11 5c2 2 2 4 0 6" /><path d="M14 3c3 3 3 7 0 10M17 1c4 4 4 10 0 14" stroke="#a585b2" /></svg></TrayItem>
        <TrayItem $w={46} aria-label="Battery"><svg width="20" height="13" viewBox="0 0 20 13"><rect x=".7" y=".7" width="16" height="11.500" rx="3" fill="none" stroke="#fff" strokeWidth="1.400" /><rect x="3" y="3" width="6" height="7" fill="#fff" /><path d="M18.500 4v5" stroke="#fff" strokeWidth="2" /></svg></TrayItem>
        <Clock>٠٨:٤١ م<br />٢٠٢٥/١١/١٤</Clock>
      </Tray>
      <Watermark>خمسات</Watermark>
    </Taskbar>
  </Shell>
);

export default App;
